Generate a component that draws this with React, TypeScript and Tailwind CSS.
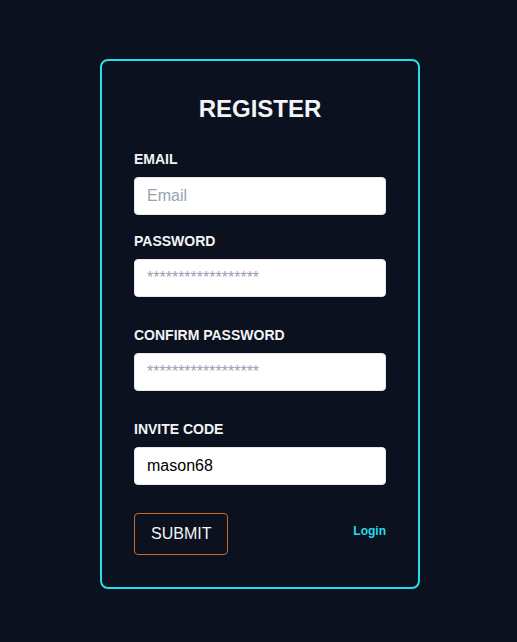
import React from "react";

const Field = ({
    label,
    type = "text",
    placeholder,
    defaultValue,
    className = "",
}: {
    label: string;
    type?: string;
    placeholder?: string;
    defaultValue?: string;
    className?: string;
}) => {
    return (
        <div className={className}>
            <label className="block text-sm leading-5 font-bold text-gray-100 mb-2">{label}</label>
            <input
                type={type}
                placeholder={placeholder}
                defaultValue={defaultValue}
                className="block w-full h-[38px] px-3 bg-white text-black text-base rounded border border-gray-200 outline-none placeholder:text-gray-400"
            />
        </div>
    );
};

const App = () => {
    return (
        <div
            className="min-h-screen w-full bg-[#0b111e] pt-[59px] pb-10"
            style={{ fontFamily: '"Liberation Sans", Arial, sans-serif' }}
        >
            <div className="ml-[100px] w-[320px] border-2 border-[#26dde8] rounded-lg bg-[#0b111e] px-8 pt-8 pb-8">
                <h1 className="text-2xl leading-8 font-bold text-gray-100 text-center mb-6">REGISTER</h1>
                <Field label="EMAIL" placeholder="Email" className="mb-4" />
                <Field label="PASSWORD" type="password" placeholder="******************" className="mb-[28px]" />
                <Field label="CONFIRM PASSWORD" type="password" placeholder="******************" className="mb-[28px]" />
                <Field label="INVITE CODE" defaultValue="mason68" className="mb-[28px]" />
                <div className="flex items-start justify-between">
                    <button className="px-4 py-2 text-base leading-6 text-gray-100 border border-[#c2692b] rounded">
                        SUBMIT
                    </button>
                    <a href="#" className="mt-[10px] text-xs leading-4 font-bold text-[#26dde8]">
                        Login
                    </a>
                </div>
            </div>
        </div>
    );
};

export default App;
